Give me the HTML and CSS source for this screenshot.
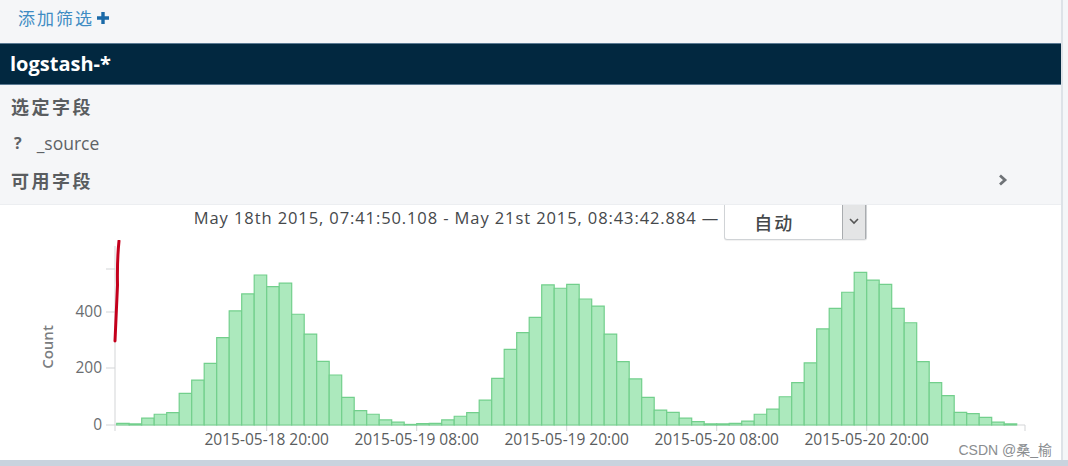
FILE: index.html
```html
<!DOCTYPE html>
<html lang="zh">
<head>
<meta charset="utf-8">
<title>Discover</title>
<link rel="stylesheet" href="styles.css">
</head>
<body>
<div class="page">
  <div class="filterbar">
    <span class="add-filter">添加筛选</span>
    <svg class="plus" width="14" height="14" viewBox="0 0 14 14"><path d="M5.3 1h3.4v4.3H13v3.4H8.7V13H5.3V8.7H1V5.3h4.3z"/></svg>
  </div>
  <div class="index-bar">logstash-*</div>
  <div class="fields">
    <div class="field-head">选定字段</div>
    <div class="field-row"><span class="qmark">?</span><span class="fname">_source</span></div>
    <div class="field-head with-chevron">可用字段
      <svg class="chev" width="12" height="14" viewBox="0 0 12 14"><path d="M3 2.5l5 4.5-5 4.5" fill="none" stroke="#6f7377" stroke-width="2.8" stroke-linejoin="miter"/></svg>
    </div>
  </div>
  <div class="chart">
    <div class="chart-title">
      <span class="range">May 18th 2015, 07:41:50.108 - May 21st 2015, 08:43:42.884 —</span>
      <div class="select">
        <span class="select-text">自动</span>
        <span class="select-arrow"><svg width="12" height="8" viewBox="0 0 12 8"><path d="M2 2l4 4 4-4" fill="none" stroke="#555" stroke-width="1.6"/></svg></span>
      </div>
    </div>
    <svg class="plot" width="1061" height="220" viewBox="0 0 1061 220">
      <g class="axis">
        <line x1="115" y1="6" x2="115" y2="191"/>
        <line x1="115" y1="185" x2="1025" y2="185"/>
        <line x1="106" y1="185" x2="115" y2="185"/>
        <line x1="106" y1="128" x2="115" y2="128"/>
        <line x1="106" y1="72" x2="115" y2="72"/>
        <line x1="106" y1="29" x2="115" y2="29"/>
        <line x1="266.7" y1="185" x2="266.7" y2="191"/>
        <line x1="416.7" y1="185" x2="416.7" y2="191"/>
        <line x1="566.7" y1="185" x2="566.7" y2="191"/>
        <line x1="716.7" y1="185" x2="716.7" y2="191"/>
        <line x1="866.7" y1="185" x2="866.7" y2="191"/>
        <line x1="1025" y1="185" x2="1025" y2="191"/>
      </g>
      <g class="ylabels">
        <text x="102" y="190">0</text>
        <text x="102" y="133">200</text>
        <text x="102" y="77">400</text>
      </g>
      <text class="ytitle" transform="translate(53 107) rotate(-90)">Count</text>
      <g class="bars" transform="translate(116.7 185) scale(12.5 -0.2825)">
        <rect x="0" width="1" height="6"/><rect x="1" width="1" height="4"/><rect x="2" width="1" height="24"/><rect x="3" width="1" height="38"/><rect x="4" width="1" height="44"/><rect x="5" width="1" height="112"/><rect x="6" width="1" height="159"/><rect x="7" width="1" height="218"/><rect x="8" width="1" height="309"/><rect x="9" width="1" height="404"/><rect x="10" width="1" height="464"/><rect x="11" width="1" height="531"/><rect x="12" width="1" height="490"/><rect x="13" width="1" height="502"/><rect x="14" width="1" height="392"/><rect x="15" width="1" height="322"/><rect x="16" width="1" height="225"/><rect x="17" width="1" height="177"/><rect x="18" width="1" height="98"/><rect x="19" width="1" height="51"/><rect x="20" width="1" height="38"/><rect x="21" width="1" height="18"/><rect x="22" width="1" height="10"/><rect x="23" width="1" height="2"/><rect x="24" width="1" height="5"/><rect x="25" width="1" height="6"/><rect x="26" width="1" height="18"/><rect x="27" width="1" height="31"/><rect x="28" width="1" height="44"/><rect x="29" width="1" height="88"/><rect x="30" width="1" height="165"/><rect x="31" width="1" height="268"/><rect x="32" width="1" height="327"/><rect x="33" width="1" height="381"/><rect x="34" width="1" height="496"/><rect x="35" width="1" height="484"/><rect x="36" width="1" height="498"/><rect x="37" width="1" height="446"/><rect x="38" width="1" height="421"/><rect x="39" width="1" height="322"/><rect x="40" width="1" height="224"/><rect x="41" width="1" height="163"/><rect x="42" width="1" height="98"/><rect x="43" width="1" height="53"/><rect x="44" width="1" height="45"/><rect x="45" width="1" height="24"/><rect x="46" width="1" height="12"/><rect x="47" width="1" height="4"/><rect x="48" width="1" height="4"/><rect x="49" width="1" height="6"/><rect x="50" width="1" height="14"/><rect x="51" width="1" height="38"/><rect x="52" width="1" height="56"/><rect x="53" width="1" height="100"/><rect x="54" width="1" height="150"/><rect x="55" width="1" height="220"/><rect x="56" width="1" height="340"/><rect x="57" width="1" height="413"/><rect x="58" width="1" height="470"/><rect x="59" width="1" height="540"/><rect x="60" width="1" height="513"/><rect x="61" width="1" height="498"/><rect x="62" width="1" height="413"/><rect x="63" width="1" height="362"/><rect x="64" width="1" height="224"/><rect x="65" width="1" height="150"/><rect x="66" width="1" height="104"/><rect x="67" width="1" height="45"/><rect x="68" width="1" height="40"/><rect x="69" width="1" height="27"/><rect x="70" width="1" height="10"/><rect x="71" width="1" height="4"/>
      </g>
      <g class="xlabels">
        <text x="266.7" y="205">2015-05-18 20:00</text>
        <text x="416.7" y="205">2015-05-19 08:00</text>
        <text x="566.7" y="205">2015-05-19 20:00</text>
        <text x="716.7" y="205">2015-05-20 08:00</text>
        <text x="866.7" y="205">2015-05-20 20:00</text>
      </g>
      <path class="marker" d="M119 1 Q117 20 117.5 45 Q116 80 115 101"/>
    </svg>
    <div class="watermark">CSDN @桑_榆</div>
  </div>
</div>
<div class="bottom-strip"></div>
</body>
</html>
```

FILE: styles.css
```css
html, body {
  margin: 0;
  padding: 0;
}
body {
  width: 1068px;
  height: 466px;
  overflow: hidden;
  background: #f4f6f8;
  font-family: "Open Sans", "Noto Sans CJK SC", sans-serif;
}
.page {
  width: 1061px;
  height: 460px;
  border-right: 2px solid #dde2e7;
  background: #f5f6f8;
  display: flex;
  flex-direction: column;
}
.filterbar {
  height: 43px;
  display: flex;
  align-items: flex-start;
  padding-left: 18px;
  box-sizing: border-box;
  padding-top: 7px;
  gap: 2px;
}
.add-filter {
  font-family: "Noto Sans CJK SC", sans-serif;
  font-size: 17px;
  letter-spacing: 2px;
  line-height: 22px;
  color: #3f8cc3;
}
.plus {
  margin-top: 4px;
  fill: #1b6aa8;
}
.index-bar {
  height: 40px;
  background: #022840;
  border-top: 1px solid #5b7a93;
  border-bottom: 1px solid #5b7a93;
  color: #ffffff;
  font-weight: 700;
  font-size: 20px;
  line-height: 40px;
  padding-left: 10px;
}
.fields {
  height: 120px;
  box-sizing: border-box;
  padding-top: 3px;
  border-bottom: 1px solid #eceef1;
}
.field-head {
  height: 37px;
  line-height: 37px;
  padding-left: 11px;
  font-family: "Noto Sans CJK SC", sans-serif;
  font-weight: 700;
  font-size: 18px;
  letter-spacing: 2.5px;
  color: #5a5d60;
}
.with-chevron {
  display: flex;
  align-items: center;
  justify-content: space-between;
  padding-right: 52px;
}
.chev {
  margin-top: -2px;
}
.field-row {
  height: 37px;
  line-height: 37px;
  padding-left: 14px;
  display: flex;
  gap: 15px;
  color: #5e6266;
}
.qmark {
  font-weight: 700;
  font-size: 16px;
}
.fname {
  font-size: 17.5px;
}
.chart {
  position: relative;
  flex: 1;
  background: #ffffff;
  display: flex;
  flex-direction: column;
}
.chart-title {
  height: 35px;
  display: flex;
  justify-content: center;
  align-items: flex-start;
  gap: 5px;
}
.range {
  padding-top: 2px;
  line-height: 22px;
  font-size: 16.5px;
  letter-spacing: 0.9px;
  color: #45484b;
}
.select {
  width: 143px;
  height: 35px;
  box-sizing: border-box;
  border: 1px solid #d0d3d6;
  border-top: none;
  border-radius: 0 0 3px 3px;
  background: #ffffff;
  display: flex;
  box-shadow: 0 1px 1px rgba(0,0,0,0.06);
}
.select-text {
  flex: 1;
  padding-left: 29px;
  font-family: "Noto Sans CJK SC", sans-serif;
  font-size: 18px;
  font-weight: 500;
  letter-spacing: 2px;
  line-height: 34px;
  color: #45484b;
}
.select-arrow {
  width: 24px;
  background: #e4e5e6;
  border-left: 1px solid #a9acaf;
  border-right: 1px solid #a9acaf;
  display: flex;
  align-items: flex-start;
  justify-content: center;
  padding-top: 12px;
  box-sizing: border-box;
}
.plot {
  display: block;
}
.axis line {
  stroke: #d3d5d7;
  stroke-width: 1;
}
.ylabels text {
  font-size: 15.5px;
  fill: #6a6d70;
  text-anchor: end;
}
.ytitle {
  font-size: 15px;
  font-weight: 600;
  fill: #7a7d80;
  text-anchor: middle;
}
.bars rect {
  fill: #ace9bd;
  stroke: #72cf8c;
  stroke-width: 1.2;
  vector-effect: non-scaling-stroke;
}
.xlabels text {
  font-size: 15.5px;
  fill: #5a5d60;
  text-anchor: middle;
}
.marker {
  fill: none;
  stroke: #c4001c;
  stroke-width: 3;
  stroke-linecap: round;
}
.watermark {
  position: absolute;
  right: 9px;
  bottom: 2px;
  font-family: "Liberation Sans", "Noto Sans CJK SC", sans-serif;
  font-size: 14px;
  line-height: 16px;
  color: #8a8d90;
}
.bottom-strip {
  height: 6px;
  background: #c9d3de;
}
```
